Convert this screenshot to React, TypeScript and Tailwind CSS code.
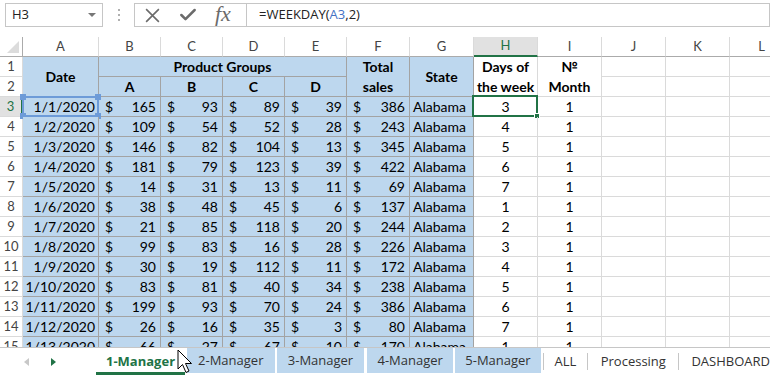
import { Check } from 'lucide-react';

// date, A, B, C, D, total, weekday, month
type Row = [string, number, number, number, number, number, number, number];

const rows: Row[] = [
  ['1/1/2020', 165, 93, 89, 39, 386, 3, 1],
  ['1/2/2020', 109, 54, 52, 28, 243, 4, 1],
  ['1/3/2020', 146, 82, 104, 13, 345, 5, 1],
  ['1/4/2020', 181, 79, 123, 39, 422, 6, 1],
  ['1/5/2020', 14, 31, 13, 11, 69, 7, 1],
  ['1/6/2020', 38, 48, 45, 6, 137, 1, 1],
  ['1/7/2020', 21, 85, 118, 20, 244, 2, 1],
  ['1/8/2020', 99, 83, 16, 28, 226, 3, 1],
  ['1/9/2020', 30, 19, 112, 11, 172, 4, 1],
  ['1/10/2020', 83, 81, 40, 34, 238, 5, 1],
  ['1/11/2020', 199, 93, 70, 24, 386, 6, 1],
  ['1/12/2020', 26, 16, 35, 3, 80, 7, 1],
  ['1/13/2020', 66, 27, 67, 10, 170, 1, 1],
];

const letters = ['A', 'B', 'C', 'D', 'E', 'F', 'G', 'H', 'I', 'J', 'K', 'L', 'M'];

const blue = 'bg-[#bdd7ee] border-r border-b border-[#a3a3a3]';
const plain = 'border-r border-b border-[#dadada]';
const rowHdr = 'flex items-center justify-center text-[13px] text-[#444] border-r border-b border-[#dadada]';

function Money({ v }: { v: number }) {
  return (
    <div className={`${blue} flex items-center justify-between pl-[6px] pr-[4px]`}>
      <span>$</span>
      <span>{v}</span>
    </div>
  );
}

function Empty() {
  return <div className={plain} />;
}

export default function App() {
  return (
    <div className="w-[770px] h-[375px] overflow-hidden bg-white flex flex-col relative font-['Lato',sans-serif] text-[14px] text-black">
      {/* ── FORMULA BAR ── */}
      <div className="h-[37px] shrink-0 flex items-start pt-[3px] font-['Open_Sans',sans-serif]">
        <div className="ml-[5px] w-[98px] h-[24px] border border-[#c6c6c6] flex items-center justify-between pl-[6px] pr-[6px] text-[13px] text-[#222]">
          <span>H3</span>
          <svg width="8" height="5" viewBox="0 0 8 5"><polygon points="0,0 8,0 4,4" fill="#777" /></svg>
        </div>
        <div className="w-[31px] h-[24px] flex flex-col items-center justify-center gap-[3px]">
          <span className="w-[2px] h-[2px] bg-[#b0b0b0]" />
          <span className="w-[2px] h-[2px] bg-[#b0b0b0]" />
          <span className="w-[2px] h-[2px] bg-[#b0b0b0]" />
        </div>
        <div className="w-[113px] h-[24px] border border-[#c6c6c6] flex items-center pl-[9px] gap-[17px] text-[#6b6b6b]">
          <svg width="17" height="17" viewBox="0 0 16 16">
            <path d="M2 2 L14 14 M14 2 L2 14" stroke="#6b6b6b" strokeWidth="1.5" fill="none" />
          </svg>
          <Check size={20} strokeWidth={3} className="text-[#6b6b6b]" />
          <span className="font-['Liberation_Serif',serif] italic text-[22px] leading-none -mt-[3px]">fx</span>
        </div>
        <div className="flex-1 h-[24px] border border-l-0 border-[#c6c6c6] flex items-center pl-[12px] text-[13px] text-[#222]">
          =WEEKDAY(<span className="text-[#4472c4]">A3</span>,2)
        </div>
      </div>

      {/* ── SHEET ── */}
      <div className="flex-1 overflow-hidden">
        <div className="grid grid-cols-[23px_76px_62px_62px_62px_62px_63px_64px_64px_64px_64px_64px_64px_64px] auto-rows-[20px] w-[858px]">
          {/* column header row */}
          <div className="border-r border-b border-[#ababab] relative">
            <svg className="absolute right-[3px] bottom-[3px]" width="12" height="12" viewBox="0 0 12 12">
              <polygon points="12,0 12,12 0,12" fill="#dcdcdc" />
            </svg>
          </div>
          {letters.map((l) =>
            l === 'H' ? (
              <div key={l} className="flex items-center justify-center text-[13px] text-[#217346] bg-[#e1e1e1] border-r border-[#dadada] border-b-2 border-b-[#217346]">
                {l}
              </div>
            ) : (
              <div key={l} className="flex items-center justify-center text-[13px] text-[#444] border-r border-[#dadada] border-b border-b-[#ababab]">
                {l}
              </div>
            )
          )}

          {/* row 1 */}
          <div className={rowHdr}>1</div>
          <div className={`${blue} row-span-2 flex items-center justify-center font-bold`}>Date</div>
          <div className={`${blue} col-span-4 flex items-center justify-center font-bold`}>Product Groups</div>
          <div className={`${blue} row-span-2 flex items-center justify-center text-center font-bold leading-[20px]`}>Total<br />sales</div>
          <div className={`${blue} row-span-2 flex items-center justify-center font-bold`}>State</div>
          <div className={`${plain} row-span-2 flex items-center justify-center text-center font-bold leading-[20px]`}>Days of<br />the week</div>
          <div className={`${plain} row-span-2 flex items-center justify-center text-center font-bold leading-[20px]`}>№<br />Month</div>
          <Empty /><Empty /><Empty /><Empty />

          {/* row 2 */}
          <div className={rowHdr}>2</div>
          {['A', 'B', 'C', 'D'].map((g) => (
            <div key={g} className={`${blue} flex items-center justify-center font-bold`}>{g}</div>
          ))}
          <Empty /><Empty /><Empty /><Empty />

          {/* data rows */}
          {rows.map((r, i) => {
            const n = i + 3;
            const active = n === 3;
            return [
              <div
                key={`h${n}`}
                className={
                  active
                    ? 'flex items-center justify-center text-[13px] text-[#217346] bg-[#e1e1e1] border-b border-[#dadada] border-r-2 border-r-[#217346]'
                    : rowHdr
                }
              >
                {n}
              </div>,
              <div key={`a${n}`} className={`${blue} flex items-center justify-end pr-[3px] relative`}>
                {r[0]}
                {active && (
                  <div className="absolute -left-[1px] -top-[1px] -right-[1px] -bottom-[1px] border-2 border-[#6d9bd8]">
                    <span className="absolute -left-[4px] -top-[4px] w-[6px] h-[6px] bg-[#6d9bd8]" />
                    <span className="absolute -right-[4px] -top-[4px] w-[6px] h-[6px] bg-[#6d9bd8]" />
                    <span className="absolute -left-[4px] -bottom-[4px] w-[6px] h-[6px] bg-[#6d9bd8]" />
                    <span className="absolute -right-[4px] -bottom-[4px] w-[6px] h-[6px] bg-[#6d9bd8]" />
                  </div>
                )}
              </div>,
              <Money key={`b${n}`} v={r[1]} />,
              <Money key={`c${n}`} v={r[2]} />,
              <Money key={`d${n}`} v={r[3]} />,
              <Money key={`e${n}`} v={r[4]} />,
              <Money key={`f${n}`} v={r[5]} />,
              <div key={`g${n}`} className={`${blue} flex items-center pl-[3px]`}>Alabama</div>,
              <div key={`i${n}`} className={`${plain} flex items-center justify-center relative`}>
                {r[6]}
                {active && (
                  <div className="absolute -left-[2px] -top-[2px] -right-[1px] -bottom-[1px] border-2 border-[#217346]">
                    <span className="absolute -right-[4px] -bottom-[4px] w-[6px] h-[6px] bg-[#217346] border border-white" />
                  </div>
                )}
              </div>,
              <div key={`j${n}`} className={`${plain} flex items-center justify-center`}>{r[7]}</div>,
              <Empty key={`k${n}`} />,
              <Empty key={`l${n}`} />,
              <Empty key={`m${n}`} />,
              <Empty key={`n${n}`} />,
            ];
          })}
        </div>
      </div>

      {/* ── SHEET TABS ── */}
      <div className="h-[28px] shrink-0 flex items-stretch bg-white border-t border-[#c6c6c6] font-['Open_Sans',sans-serif] text-[13px] text-[#333]">
        <div className="w-[97px] flex items-center pl-[24px] gap-[22px]">
          <svg width="5" height="8" viewBox="0 0 5 8"><polygon points="5,0 5,8 0,4" fill="#c8c8c8" /></svg>
          <svg width="5" height="8" viewBox="0 0 5 8"><polygon points="0,0 0,8 5,4" fill="#217346" /></svg>
        </div>
        <div className="w-[89px] flex items-center justify-center font-bold text-[#217346] bg-white border-b-[3px] border-[#217346] pt-[3px]">
          1-Manager
        </div>
        <div className="w-[2px]" />
        <div className="w-[89px] flex items-center justify-center bg-[#bdd7ee] mb-[2px] pt-[1px]">2-Manager</div>
        <div className="w-[2px]" />
        <div className="w-[88px] flex items-center justify-center bg-[#bdd7ee] mb-[2px] pt-[1px]">3-Manager</div>
        <div className="w-[3px]" />
        <div className="w-[87px] flex items-center justify-center bg-[#bdd7ee] mb-[2px] pt-[1px]">4-Manager</div>
        <div className="w-[2px]" />
        <div className="w-[86px] flex items-center justify-center bg-[#bdd7ee] mb-[2px] pt-[1px]">5-Manager</div>
        <div className="w-[1px] bg-[#c6c6c6] my-[5px] ml-[2px]" />
        <div className="w-[44px] flex items-center justify-center pt-[1px]">ALL</div>
        <div className="w-[1px] bg-[#c6c6c6] my-[5px]" />
        <div className="w-[91px] flex items-center justify-center pt-[1px]">Processing</div>
        <div className="w-[1px] bg-[#c6c6c6] my-[5px]" />
        <div className="flex-1 flex items-center pl-[12px] whitespace-nowrap pt-[1px]">DASHBOARD</div>
      </div>

      {/* mouse pointer */}
      <svg className="absolute left-[177px] top-[349px]" width="16" height="26" viewBox="0 0 16 26">
        <path d="M1 1 L1 20 L5.5 15.5 L9 23.5 L12 22 L8.5 14.5 L14.5 14.5 Z" fill="#fff" stroke="#000" strokeWidth="1" strokeLinejoin="round" />
      </svg>
    </div>
  );
}
